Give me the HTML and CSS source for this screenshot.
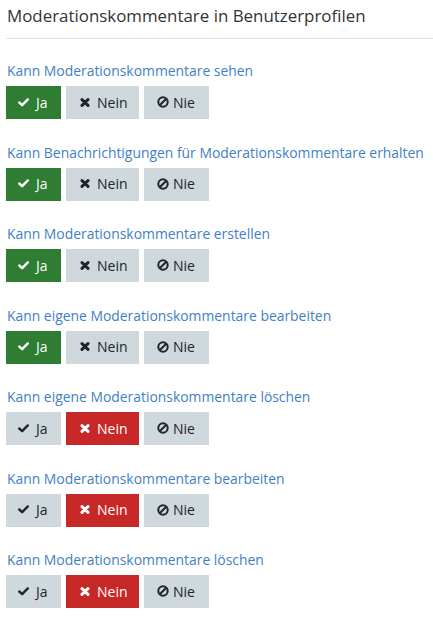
FILE: index.html
```html
<!DOCTYPE html>
<html lang="de">
<head>
<meta charset="utf-8">
<title>Moderationskommentare in Benutzerprofilen</title>
<link rel="stylesheet" href="styles.css">
</head>
<body>
<div class="page">
  <h1 class="title">Moderationskommentare in Benutzerprofilen</h1>

  <div class="perm">
    <div class="label">Kann Moderationskommentare sehen</div>
    <div class="btns">
      <span class="btn yes on"><svg class="ico ck" viewBox="0 0 12 10"><path d="M1.3 5 L4.5 8 L10.8 1.6" /></svg>Ja</span>
      <span class="btn no"><svg class="ico x" viewBox="0 0 10 9"><path d="M2 1.6 L8 7.4 M8 1.6 L2 7.4" /></svg>Nein</span>
      <span class="btn never"><svg class="ico ban" viewBox="0 0 12 12"><circle cx="6" cy="6" r="4.7"/><path d="M2.7 9.3 L9.3 2.7"/></svg>Nie</span>
    </div>
  </div>

  <div class="perm">
    <div class="label">Kann Benachrichtigungen für Moderationskommentare erhalten</div>
    <div class="btns">
      <span class="btn yes on"><svg class="ico ck" viewBox="0 0 12 10"><path d="M1.3 5 L4.5 8 L10.8 1.6" /></svg>Ja</span>
      <span class="btn no"><svg class="ico x" viewBox="0 0 10 9"><path d="M2 1.6 L8 7.4 M8 1.6 L2 7.4" /></svg>Nein</span>
      <span class="btn never"><svg class="ico ban" viewBox="0 0 12 12"><circle cx="6" cy="6" r="4.7"/><path d="M2.7 9.3 L9.3 2.7"/></svg>Nie</span>
    </div>
  </div>

  <div class="perm">
    <div class="label">Kann Moderationskommentare erstellen</div>
    <div class="btns">
      <span class="btn yes on"><svg class="ico ck" viewBox="0 0 12 10"><path d="M1.3 5 L4.5 8 L10.8 1.6" /></svg>Ja</span>
      <span class="btn no"><svg class="ico x" viewBox="0 0 10 9"><path d="M2 1.6 L8 7.4 M8 1.6 L2 7.4" /></svg>Nein</span>
      <span class="btn never"><svg class="ico ban" viewBox="0 0 12 12"><circle cx="6" cy="6" r="4.7"/><path d="M2.7 9.3 L9.3 2.7"/></svg>Nie</span>
    </div>
  </div>

  <div class="perm">
    <div class="label">Kann eigene Moderationskommentare bearbeiten</div>
    <div class="btns">
      <span class="btn yes on"><svg class="ico ck" viewBox="0 0 12 10"><path d="M1.3 5 L4.5 8 L10.8 1.6" /></svg>Ja</span>
      <span class="btn no"><svg class="ico x" viewBox="0 0 10 9"><path d="M2 1.6 L8 7.4 M8 1.6 L2 7.4" /></svg>Nein</span>
      <span class="btn never"><svg class="ico ban" viewBox="0 0 12 12"><circle cx="6" cy="6" r="4.7"/><path d="M2.7 9.3 L9.3 2.7"/></svg>Nie</span>
    </div>
  </div>

  <div class="perm">
    <div class="label">Kann eigene Moderationskommentare löschen</div>
    <div class="btns">
      <span class="btn yes"><svg class="ico ck" viewBox="0 0 12 10"><path d="M1.3 5 L4.5 8 L10.8 1.6" /></svg>Ja</span>
      <span class="btn no on"><svg class="ico x" viewBox="0 0 10 9"><path d="M2 1.6 L8 7.4 M8 1.6 L2 7.4" /></svg>Nein</span>
      <span class="btn never"><svg class="ico ban" viewBox="0 0 12 12"><circle cx="6" cy="6" r="4.7"/><path d="M2.7 9.3 L9.3 2.7"/></svg>Nie</span>
    </div>
  </div>

  <div class="perm">
    <div class="label">Kann Moderationskommentare bearbeiten</div>
    <div class="btns">
      <span class="btn yes"><svg class="ico ck" viewBox="0 0 12 10"><path d="M1.3 5 L4.5 8 L10.8 1.6" /></svg>Ja</span>
      <span class="btn no on"><svg class="ico x" viewBox="0 0 10 9"><path d="M2 1.6 L8 7.4 M8 1.6 L2 7.4" /></svg>Nein</span>
      <span class="btn never"><svg class="ico ban" viewBox="0 0 12 12"><circle cx="6" cy="6" r="4.7"/><path d="M2.7 9.3 L9.3 2.7"/></svg>Nie</span>
    </div>
  </div>

  <div class="perm">
    <div class="label">Kann Moderationskommentare löschen</div>
    <div class="btns">
      <span class="btn yes"><svg class="ico ck" viewBox="0 0 12 10"><path d="M1.3 5 L4.5 8 L10.8 1.6" /></svg>Ja</span>
      <span class="btn no on"><svg class="ico x" viewBox="0 0 10 9"><path d="M2 1.6 L8 7.4 M8 1.6 L2 7.4" /></svg>Nein</span>
      <span class="btn never"><svg class="ico ban" viewBox="0 0 12 12"><circle cx="6" cy="6" r="4.7"/><path d="M2.7 9.3 L9.3 2.7"/></svg>Nie</span>
    </div>
  </div>
</div>
</body>
</html>
```
FILE: styles.css
```css
html, body {
  margin: 0;
  padding: 0;
  background: #ffffff;
}
body {
  font-family: "Open Sans", "Noto Sans", sans-serif;
  color: #212529;
}
.page {
  padding: 5px 0 0 6px;
}
.title {
  margin: 0 0 22px 0;
  padding: 0 0 11px 1px;
  font-size: 16.9px;
  font-weight: 400;
  line-height: 22px;
  color: #333333;
  border-bottom: 1px solid #e0e0e0;
}
.perm {
  margin-bottom: 23.5px;
}
.label {
  font-size: 13.9px;
  line-height: 20px;
  color: #3f80c6;
  padding-left: 1px;
  margin-bottom: 5px;
}
.btns {
  display: flex;
  gap: 5px;
}
.btn {
  display: inline-flex;
  align-items: center;
  height: 33px;
  box-sizing: border-box;
  padding: 0 0 1px 12px;
  font-size: 14px;
  background: #cfd8dc;
  color: #212529;
}
.btn.yes { width: 55px; }
.btn.no { width: 73px; padding-left: 14px; }
.btn.never { width: 65px; padding-left: 13px; }
.btn.yes.on { background: #2e7d32; color: #ffffff; }
.btn.no.on { background: #c62828; color: #ffffff; }
.ico {
  flex: none;
  fill: none;
  stroke: currentColor;
}
.ico.ck {
  width: 11px;
  height: 9px;
  margin-right: 7px;
  stroke-width: 2.7;
  stroke-linecap: round;
  stroke-linejoin: round;
}
.ico.x {
  width: 10px;
  height: 9px;
  margin-right: 7px;
  stroke-width: 3;
  stroke-linecap: round;
}
.ico.ban {
  width: 12px;
  height: 12px;
  margin-right: 4px;
  stroke-width: 2;
}
```
